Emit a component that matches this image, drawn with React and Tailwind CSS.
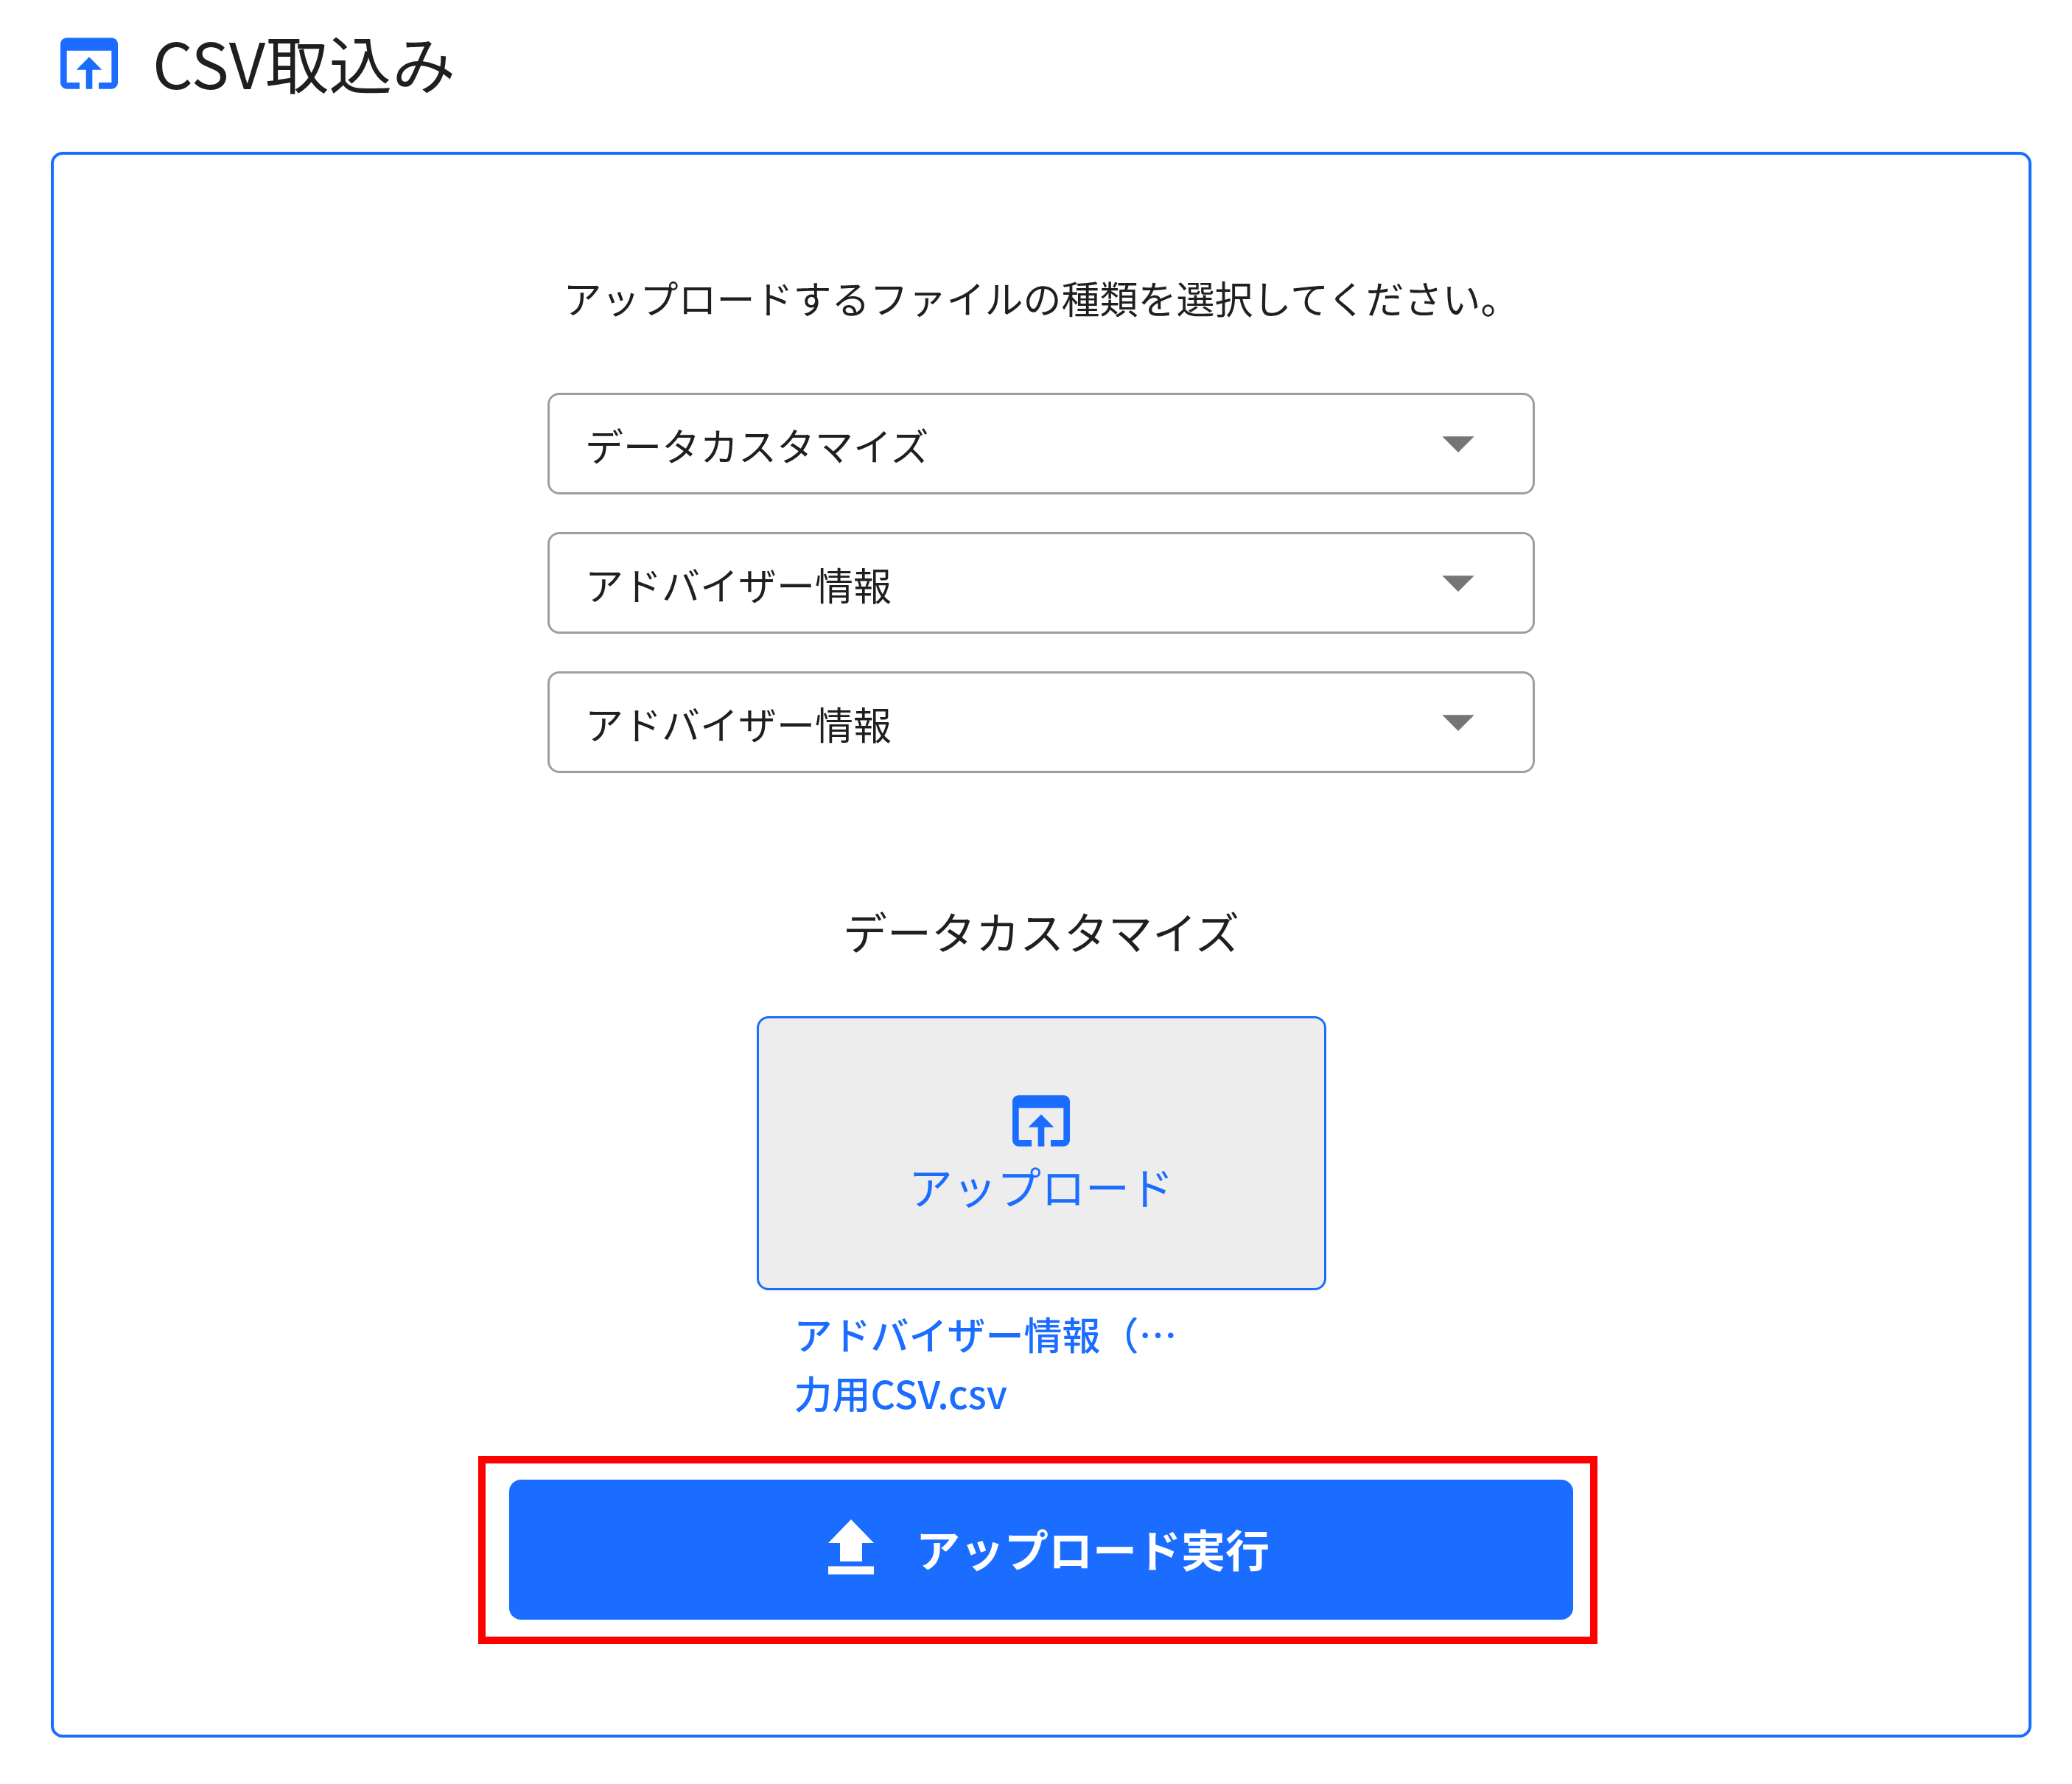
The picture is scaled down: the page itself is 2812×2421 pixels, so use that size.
import { useState } from 'react';

const fileTypes = [
  { id: 'category', label: 'カテゴリ', value: 'データカスタマイズ' },
  { id: 'target', label: '対象', value: 'アドバイザー情報' },
  { id: 'format', label: 'フォーマット', value: 'アドバイザー情報' },
];

const options = ['データカスタマイズ', 'アドバイザー情報'];

const OpenInBrowserIcon = () => (
  <svg viewBox="0 0 24 24" className="size-[104px] shrink-0 fill-[#1b6dff]" aria-hidden="true">
    <path d="M19 4H5c-1.11 0-2 .9-2 2v12c0 1.1.89 2 2 2h4v-2H5V8h14v10h-4v2h4c1.1 0 2-.9 2-2V6c0-1.1-.89-2-2-2zm-7 6l-4 4h3v6h2v-6h3l-4-4z" />
  </svg>
);

const UploadIcon = () => (
  <svg viewBox="0 0 104 104" className="size-[104px] shrink-0 fill-white" aria-hidden="true">
    <path d="M52 13L83 45H67V70H37V45H21ZM21 76.500H83V87.500H21Z" />
  </svg>
);

const SelectField = ({ id, label, value, onChange }) => (
  <div className="relative w-full">
    <select
      id={id}
      aria-label={label}
      value={value}
      onChange={(e) => onChange(id, e.target.value)}
      className="block h-[138px] w-full appearance-none rounded-2xl border-3 border-[#9e9e9e] bg-white pt-1 pr-40 pl-12 text-[52px] text-[#1f1f1f] focus:outline-none"
    >
      {options.map((option) => (
        <option key={option} value={option}>{option}</option>
      ))}
    </select>
    <svg
      viewBox="0 0 24 24"
      className="pointer-events-none absolute top-4 right-[52px] size-[104px] fill-[#757575]"
      aria-hidden="true"
    >
      <path d="M7 10l5 5 5-5z" />
    </svg>
  </div>
);

const App = () => {
  const [values, setValues] = useState(
    Object.fromEntries(fileTypes.map((field) => [field.id, field.value]))
  );

  const handleChange = (id, value) => {
    setValues((prev) => ({ ...prev, [id]: value }));
  };

  return (
    <main className="min-h-screen bg-white pt-[22px] pr-[55px] pb-[60px] pl-[69px] font-['Noto_Sans_CJK_JP',sans-serif] text-[#1f1f1f]">
      <header className="flex items-center gap-[34px]">
        <OpenInBrowserIcon />
        <h1 className="pb-1 text-[86px] leading-[124px]">CSV取込み</h1>
      </header>

      <section className="mt-14 flex flex-col items-center rounded-2xl border-4 border-[#1b6dff] px-8 py-[156px]">
        <p className="text-[52px] leading-[76px]">アップロードするファイルの種類を選択してください。</p>

        <div className="mt-[91px] flex w-full max-w-[1340px] flex-col gap-[51px]">
          {fileTypes.map((field) => (
            <SelectField
              key={field.id}
              id={field.id}
              label={field.label}
              value={values[field.id]}
              onChange={handleChange}
            />
          ))}
        </div>

        <h2 className="mt-[169px] text-[60px] leading-[90px]">データカスタマイズ</h2>

        <div className="mt-[71px] w-full max-w-[773px]">
          <button
            type="button"
            className="flex h-[372px] w-full flex-col items-center justify-center rounded-2xl border-3 border-[#1b6dff] bg-[#ededed] pb-4 text-[60px] leading-[72px] text-[#1b6dff]"
          >
            <OpenInBrowserIcon />
            アップロード
          </button>
          <a href="#file" className="mt-[19px] block px-[51px] text-[52px] leading-[80px] font-medium text-[#1b6dff]">
            アドバイザー情報（…
            <br />
            力用CSV.csv
          </a>
        </div>

        <div className="relative mt-[78px] w-full max-w-[1444px]">
          <button
            type="submit"
            className="flex h-[190px] w-full items-center justify-center gap-9 rounded-2xl bg-[#1b6dff] pb-1 text-[60px] font-bold text-white"
          >
            <UploadIcon />
            アップロード実行
          </button>
          <div className="pointer-events-none absolute -top-8 -right-[33px] -bottom-[33px] -left-[42px] border-10 border-[#ff0000]" />
        </div>
      </section>
    </main>
  );
};

export default App;
